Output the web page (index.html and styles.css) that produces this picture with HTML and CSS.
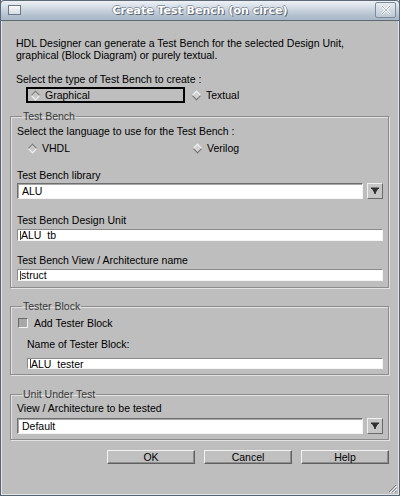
FILE: index.html
```html
<!DOCTYPE html>
<html>
<head>
<meta charset="utf-8">
<link rel="stylesheet" href="styles.css">
</head>
<body>
<div class="window">
  <div class="titlebar">
    <span class="win-icon"></span>
    <span class="title">Create Test Bench (on circe)</span>
    <span class="close-btn"><svg width="12" height="10" viewBox="0 0 12 10"><path d="M2 1 L10 9 M10 1 L2 9" stroke="#ffffff" stroke-width="2.4"/><path d="M2 1 L10 9 M10 1 L2 9" stroke="#9aa6b2" stroke-width="0.8"/></svg></span>
  </div>
  <div class="content">
    <p class="intro">HDL Designer can generate a Test Bench for the selected Design Unit,<br>graphical (Block Diagram) or purely textual.</p>
    <div class="label top-label">Select the type of Test Bench to create :</div>
    <div class="type-row">
      <div class="radio"><span class="diamond on"></span>Graphical</div>
      <div class="radio"><span class="diamond"></span>Textual</div>
    </div>

    <fieldset class="group group-tb">
      <legend>Test Bench</legend>
      <div class="label lang-label">Select the language to use for the Test Bench :</div>
      <div class="lang-row">
        <div class="radio"><span class="diamond on"></span>VHDL</div>
        <div class="radio"><span class="diamond"></span>Verilog</div>
      </div>
      <div class="label lib-label">Test Bench library</div>
      <div class="combo lib-combo">
        <div class="combo-input">ALU</div>
        <span class="drop"><svg width="10" height="10" viewBox="0 0 10 10"><path d="M1 1.5 H9 V3 H1 Z M2 3 H8 L5 8 Z" fill="#303030"/><path d="M4.3 3 H5.7 V8 H4.3 Z" fill="#303030"/></svg></span>
      </div>
      <div class="label unit-label">Test Bench Design Unit</div>
      <div class="text-input"><span class="caret"></span>ALU_tb</div>
      <div class="label view-label">Test Bench View / Architecture name</div>
      <div class="text-input"><span class="caret"></span>struct</div>
    </fieldset>

    <fieldset class="group group-tester">
      <legend>Tester Block</legend>
      <div class="check-row"><span class="checkbox"></span>Add Tester Block</div>
      <div class="indent">
        <div class="label name-label">Name of Tester Block:</div>
        <div class="text-input"><span class="caret"></span>ALU_tester</div>
      </div>
    </fieldset>

    <fieldset class="group group-uut">
      <legend>Unit Under Test</legend>
      <div class="label uut-label">View / Architecture to be tested</div>
      <div class="combo uut-combo">
        <div class="combo-input">Default</div>
        <span class="drop"><svg width="10" height="10" viewBox="0 0 10 10"><path d="M1 1.5 H9 V3 H1 Z M2 3 H8 L5 8 Z" fill="#303030"/><path d="M4.3 3 H5.7 V8 H4.3 Z" fill="#303030"/></svg></span>
      </div>
    </fieldset>

    <div class="buttons">
      <button class="btn">OK</button>
      <button class="btn">Cancel</button>
      <button class="btn">Help</button>
    </div>
  </div>
  <span class="grip"><svg width="10" height="10" viewBox="0 0 10 10"><path d="M9 2 L2 9 M9 5 L5 9 M9 8 L8 9" stroke="#808080" stroke-width="1"/><path d="M10 3 L3 10 M10 6 L6 10" stroke="#f0f0f0" stroke-width="1"/></svg></span>
</div>
</body>
</html>
```

FILE: styles.css
```css
* { box-sizing: border-box; }
html, body { margin: 0; padding: 0; }
body {
  width: 400px;
  height: 496px;
  overflow: hidden;
  background: #bfbfbf;
  font-family: "Liberation Sans", Arial, sans-serif;
  font-size: 10.5px;
  color: #000;
}
.window {
  position: relative;
  width: 400px;
  height: 496px;
  background: #bebebe;
  border: 1px solid #5a6470;
  border-top: none;
  display: flex;
  flex-direction: column;
  box-shadow: inset 1px 0 0 #dfe5ec, inset -1px 0 0 #dfe5ec, inset 0 -1px 0 #dfe5ec;
}
.titlebar {
  height: 21px;
  flex: none;
  margin: 0 -1px;
  display: flex;
  align-items: center;
  justify-content: center;
  position: relative;
  border: 1px solid #5e6976;
  border-radius: 4px 4px 0 0;
  background: linear-gradient(#eef2f6 0%, #d3dbe4 35%, #b4c2d0 75%, #a9b7c6 100%);
}
.win-icon {
  position: absolute;
  left: 7px;
  top: 4px;
  width: 13px;
  height: 10px;
  border: 1px solid #6e7884;
  background: linear-gradient(#f6f8fa, #d6dde4);
  box-shadow: inset 0 1px 0 #fff;
}
.title {
  font-family: "DejaVu Sans", sans-serif;
  font-weight: bold;
  font-size: 11px;
  color: #ffffff;
  text-shadow: 1px 1px 0 #5d6773, -1px 0 0 #8a96a4, 0 -1px 0 #8a96a4;
}
.close-btn {
  position: absolute;
  right: 3px;
  top: 1px;
  width: 21px;
  height: 16px;
  border: 1px solid #7e8a97;
  border-radius: 2px;
  background: linear-gradient(#e6ecf2, #bcc8d4);
  display: flex;
  align-items: center;
  justify-content: center;
}
.content {
  flex: 1;
  padding: 0 10px 0 9px;
  display: flex;
  flex-direction: column;
}
.intro {
  margin: 16px 0 0 6px;
  line-height: 12px;
}
.label { line-height: 13px; }
.top-label { margin: 12px 0 0 6px; }
.type-row {
  display: flex;
  align-items: center;
  margin: 1px 0 0 16px;
  height: 16px;
}
.radio {
  display: flex;
  align-items: center;
  height: 16px;
}
.type-row .radio:first-child {
  width: 159px;
  border: 2px solid #000;
  padding-left: 2px;
}
.type-row .radio:last-child { margin-left: 6px; }
.diamond {
  width: 7px;
  height: 7px;
  margin: 0 6px 0 2px;
  transform: rotate(45deg);
  border: 1px solid;
  border-color: #f4f4f4 #6a6a6a #6a6a6a #f4f4f4;
  background: #d2d2d2;
  flex: none;
}
.diamond.on {
  border-color: #7a7a7a #f4f4f4 #f4f4f4 #7a7a7a;
  background: #c8c8c8;
}
.group {
  margin: 7px 0 0 0;
  padding: 0 5px 5px 6px;
  border: 1px solid #8c8c8c;
  box-shadow: 1px 1px 0 #e2e2e2, inset 1px 1px 0 #e2e2e2;
  min-width: 0;
}
.group legend {
  padding: 0 1px;
  margin-left: 5px;
  color: #3a3a3a;
  line-height: 13px;
}
.lang-label { margin-top: 2px; }
.lang-row {
  display: flex;
  align-items: center;
  height: 16px;
  margin: 2px 0 0 10px;
}
.lang-row .radio:first-child { width: 165px; }
.lib-label { margin-top: 13px; }
.unit-label { margin-top: 15px; }
.view-label { margin-top: 13px; }
.combo {
  display: flex;
  align-items: center;
  margin-top: 1px;
  gap: 4px;
}
.uut-combo { margin-top: 3px; }
.combo-input {
  flex: 1;
  height: 16px;
  background: #fff;
  border: 1px solid;
  border-color: #6e6e6e #f4f4f4 #f4f4f4 #6e6e6e;
  box-shadow: inset 1px 1px 0 #a8a8a8;
  padding-left: 4px;
  line-height: 14px;
}
.drop {
  width: 16px;
  height: 16px;
  flex: none;
  border: 1px solid;
  border-color: #f0f0f0 #6a6a6a #6a6a6a #f0f0f0;
  background: #c6c6c6;
  display: flex;
  align-items: center;
  justify-content: center;
}
.text-input {
  height: 12px;
  margin-top: 2px;
  background: #fff;
  border: 1px solid;
  border-color: #8a8a8a #f4f4f4 #f4f4f4 #8a8a8a;
  display: flex;
  align-items: center;
  padding-left: 2px;
  overflow: hidden;
  line-height: 12px;
  position: relative;
}
.caret {
  width: 1px;
  height: 9px;
  background: #404040;
  margin-right: 0;
  flex: none;
}
.group-tb { padding-bottom: 6px; }
.group-tester { margin-top: 12px; padding-bottom: 5px; }
.check-row {
  display: flex;
  align-items: center;
  height: 14px;
  margin: 3px 0 0 0;
}
.checkbox {
  width: 10px;
  height: 10px;
  margin: 0 6px 0 1px;
  border: 1px solid;
  border-color: #6a6a6a #f2f2f2 #f2f2f2 #6a6a6a;
  background: #a8a8a8;
  flex: none;
}
.indent { padding-left: 10px; }
.name-label { margin-top: 8px; }
.indent .text-input { margin-top: 7px; height: 11px; }
.group-uut { margin-top: 13px; padding-bottom: 5px; }
.uut-label { margin-top: 1px; }
.buttons {
  display: flex;
  justify-content: flex-end;
  gap: 9px;
  margin-top: 10px;
}
.btn {
  width: 88px;
  height: 14px;
  padding: 0;
  font: inherit;
  line-height: 12px;
  color: #000;
  background: #c0c0c0;
  border: 1px solid;
  border-color: #f2f2f2 #606060 #606060 #f2f2f2;
  box-shadow: inset -1px -1px 0 #8e8e8e;
}
.grip {
  position: absolute;
  right: 2px;
  bottom: 2px;
  width: 10px;
  height: 10px;
  display: flex;
}
```
